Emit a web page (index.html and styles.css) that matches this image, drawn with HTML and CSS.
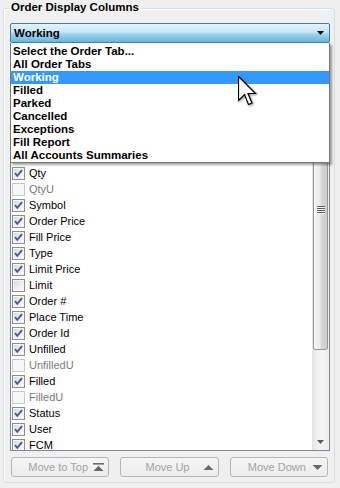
FILE: index.html
```html
<!DOCTYPE html>
<html>
<head>
<meta charset="utf-8">
<link rel="stylesheet" href="styles.css">
</head>
<body>
<div class="group">
  <div class="title">Order Display Columns</div>
  <div class="combo-wrap">
    <div class="combo"><span>Working</span><svg class="combo-arrow" width="7" height="4" viewBox="0 0 7 4"><path d="M0 0h7L3.5 4z"/></svg></div>
    <div class="dropdown">
      <div class="opt">Select the Order Tab...</div>
      <div class="opt">All Order Tabs</div>
      <div class="opt sel">Working</div>
      <div class="opt">Filled</div>
      <div class="opt">Parked</div>
      <div class="opt">Cancelled</div>
      <div class="opt">Exceptions</div>
      <div class="opt">Fill Report</div>
      <div class="opt">All Accounts Summaries</div>
      <svg class="cursor" width="20" height="31" viewBox="0 0 20 31"><path d="M0.5 0.5V24.5L6.5 18.5L10.5 28.5L14 27L10 17.5H17.5Z" fill="#fff" stroke="#000" stroke-width="1.2" stroke-linejoin="miter"/></svg>
    </div>
  </div>
  <div class="listbox">
    <div class="items">
      <div class="row"><span class="cb"><svg viewBox="0 0 11 11"><path d="M2 5.2l2.3 2.6L9 2.2"/></svg></span><span>Qty</span></div>
      <div class="row dis"><span class="cb"></span><span>QtyU</span></div>
      <div class="row"><span class="cb"><svg viewBox="0 0 11 11"><path d="M2 5.2l2.3 2.6L9 2.2"/></svg></span><span>Symbol</span></div>
      <div class="row"><span class="cb"><svg viewBox="0 0 11 11"><path d="M2 5.2l2.3 2.6L9 2.2"/></svg></span><span>Order Price</span></div>
      <div class="row"><span class="cb"><svg viewBox="0 0 11 11"><path d="M2 5.2l2.3 2.6L9 2.2"/></svg></span><span>Fill Price</span></div>
      <div class="row"><span class="cb"><svg viewBox="0 0 11 11"><path d="M2 5.2l2.3 2.6L9 2.2"/></svg></span><span>Type</span></div>
      <div class="row"><span class="cb"><svg viewBox="0 0 11 11"><path d="M2 5.2l2.3 2.6L9 2.2"/></svg></span><span>Limit Price</span></div>
      <div class="row"><span class="cb"></span><span>Limit</span></div>
      <div class="row"><span class="cb"><svg viewBox="0 0 11 11"><path d="M2 5.2l2.3 2.6L9 2.2"/></svg></span><span>Order #</span></div>
      <div class="row"><span class="cb"><svg viewBox="0 0 11 11"><path d="M2 5.2l2.3 2.6L9 2.2"/></svg></span><span>Place Time</span></div>
      <div class="row"><span class="cb"><svg viewBox="0 0 11 11"><path d="M2 5.2l2.3 2.6L9 2.2"/></svg></span><span>Order Id</span></div>
      <div class="row"><span class="cb"><svg viewBox="0 0 11 11"><path d="M2 5.2l2.3 2.6L9 2.2"/></svg></span><span>Unfilled</span></div>
      <div class="row dis"><span class="cb"></span><span>UnfilledU</span></div>
      <div class="row"><span class="cb"><svg viewBox="0 0 11 11"><path d="M2 5.2l2.3 2.6L9 2.2"/></svg></span><span>Filled</span></div>
      <div class="row dis"><span class="cb"></span><span>FilledU</span></div>
      <div class="row"><span class="cb"><svg viewBox="0 0 11 11"><path d="M2 5.2l2.3 2.6L9 2.2"/></svg></span><span>Status</span></div>
      <div class="row"><span class="cb"><svg viewBox="0 0 11 11"><path d="M2 5.2l2.3 2.6L9 2.2"/></svg></span><span>User</span></div>
      <div class="row"><span class="cb"><svg viewBox="0 0 11 11"><path d="M2 5.2l2.3 2.6L9 2.2"/></svg></span><span>FCM</span></div>
    </div>
    <div class="scrollbar">
      <div class="sb-btn"></div>
      <div class="sb-gap"></div>
      <div class="thumb"><span class="grip"></span></div>
      <div class="sb-track"></div>
      <div class="sb-btn"><svg width="7" height="4" viewBox="0 0 7 4"><path d="M0 0h7L3.5 4z"/></svg></div>
    </div>
  </div>
  <div class="buttons">
    <div class="btn"><span></span><span class="label">Move to Top</span><svg class="arr" width="11" height="8" viewBox="0 0 11 8"><rect x="0" y="0" width="11" height="1.6"/><path d="M0.5 8L5.5 2.8L10.5 8z"/></svg></div>
    <div class="btn"><span></span><span class="label">Move Up</span><svg class="arr" width="11" height="8" viewBox="0 0 11 8"><path d="M0.5 7L5.5 2L10.5 7z"/></svg></div>
    <div class="btn"><span></span><span class="label">Move Down</span><svg class="arr" width="11" height="8" viewBox="0 0 11 8"><path d="M0.5 2L5.5 7L10.5 2z"/></svg></div>
  </div>
</div>
</body>
</html>
```
FILE: styles.css
```css
html, body {
  margin: 0;
  padding: 0;
  background: #f0f0f0;
}
body {
  font-family: "Liberation Sans", Arial, sans-serif;
  font-size: 11px;
  color: #000;
  width: 340px;
  height: 488px;
  overflow: hidden;
}
.group {
  margin: 8px 5px 0 3px;
  border: 1px solid #d5dfe5;
  border-radius: 3px;
  padding: 0 4px 5px 6px;
  box-shadow: inset 1px 1px 0 #fff;
}
.title {
  width: fit-content;
  margin-top: -8px;
  padding: 0 2px 0 1px;
  background: #f0f0f0;
  font-weight: bold;
  font-size: 11.5px;
  line-height: 13px;
}
.combo-wrap {
  position: relative;
  margin-top: 9px;
  z-index: 2;
}
.combo {
  height: 20px;
  box-sizing: border-box;
  border: 1px solid #3c7fb1;
  border-radius: 2px;
  background: linear-gradient(#e5f4fc 0%, #c6e6f7 45%, #a2d4ef 55%, #6bb3dc 100%);
  display: flex;
  align-items: center;
  justify-content: space-between;
  padding: 0 5px 0 3px;
  font-weight: bold;
  font-size: 11.5px;
}
.combo-arrow path { fill: #000; }
.dropdown {
  position: absolute;
  left: 0;
  top: 100%;
  width: 320px;
  box-sizing: border-box;
  background: #fff;
  border: 1px solid #7a7a7a;
  border-top: 0;
  padding: 2px 0 0;
  box-shadow: 2px 2px 2px rgba(0, 0, 0, 0.35);
}
.opt {
  height: 13px;
  line-height: 13px;
  padding-left: 2px;
  font-weight: bold;
  font-size: 11.5px;
  white-space: nowrap;
}
.opt.sel {
  background: #3399ff;
  color: #fff;
}
.cursor {
  position: absolute;
  left: 227px;
  top: 33px;
  filter: drop-shadow(1px 1px 1px rgba(0, 0, 0, 0.45));
}
.listbox {
  margin-top: 4px;
  height: 404px;
  box-sizing: border-box;
  border: 1px solid #828790;
  background: #fff;
  display: flex;
  overflow: hidden;
}
.items {
  flex: 1;
  padding-top: 117px;
  overflow: hidden;
}
.row {
  height: 16px;
  display: flex;
  align-items: center;
  gap: 4px;
  padding-left: 1px;
  white-space: nowrap;
}
.cb {
  width: 13px;
  height: 13px;
  box-sizing: border-box;
  border: 1px solid #8e8f8f;
  background: linear-gradient(135deg, #d5d7da 0%, #f1f1f2 60%, #fdfdfd 100%);
  box-shadow: inset 0 0 0 1px #f4f4f4;
  flex: none;
  display: flex;
}
.cb svg {
  width: 11px;
  height: 11px;
}
.cb path {
  fill: none;
  stroke: #4a5c8f;
  stroke-width: 1.9;
}
.row.dis { color: #7a7a7a; }
.row.dis .cb {
  border-color: #c9c9c9;
  background: #f7f7f7;
  box-shadow: none;
}
.scrollbar {
  width: 17px;
  flex: none;
  display: flex;
  flex-direction: column;
  background: linear-gradient(to right, #e3e3e3, #f1f1f1 30%, #f4f4f4 70%, #ebebeb);
}
.sb-btn {
  height: 17px;
  flex: none;
  display: flex;
  align-items: center;
  justify-content: center;
}
.sb-btn path { fill: #5a5a5a; }
.sb-gap { height: 4px; flex: none; }
.thumb {
  height: 281px;
  flex: none;
  margin: 0 1px;
  box-sizing: border-box;
  border: 1px solid #979797;
  border-radius: 2px;
  background: linear-gradient(to right, #f2f2f2 0%, #ebebeb 45%, #d9d9d9 55%, #cbcbcb 100%);
  box-shadow: inset 1px 1px 0 #fafafa;
  display: flex;
  align-items: center;
  justify-content: center;
}
.grip {
  width: 8px;
  height: 8px;
  background: repeating-linear-gradient(#5c5c5c 0 1px, #f6f6f6 1px 2px);
}
.sb-track { flex: 1; }
.buttons {
  margin-top: 6px;
  padding: 0 2px 0 1px;
  display: grid;
  grid-template-columns: repeat(3, 1fr);
  gap: 11px;
}
.btn {
  height: 20px;
  box-sizing: border-box;
  border: 1px solid #b3b7ba;
  border-radius: 3px;
  background: linear-gradient(#f6f6f6, #ededed);
  display: grid;
  grid-template-columns: 1fr auto 1fr;
  align-items: center;
  color: #a3a3a3;
  padding-right: 4px;
}
.btn .label { white-space: nowrap; }
.btn .arr {
  justify-self: end;
}
.btn .arr path, .btn .arr rect { fill: #6a6a6a; }
```
